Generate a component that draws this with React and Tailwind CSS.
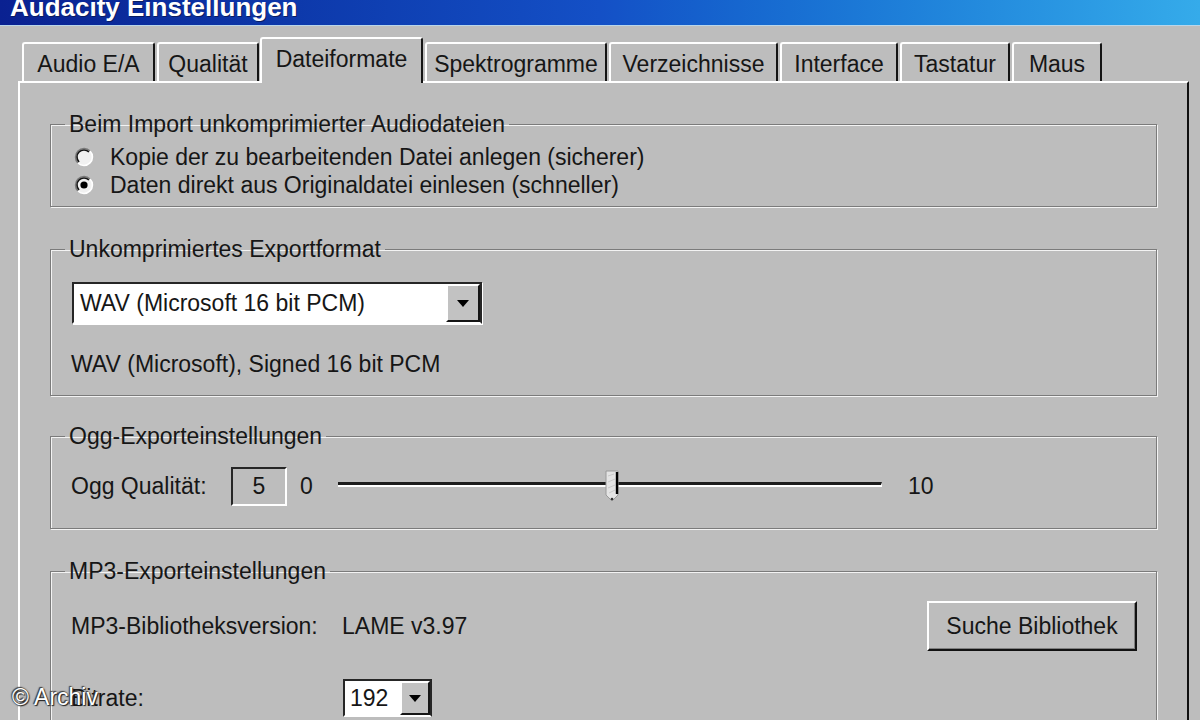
import React from 'react';

const tabs = [
    { name: 'Audio E/A', cls: 'w-[133px]' },
    { name: 'Qualität', cls: 'w-[102px] ml-[2px]' },
    { name: 'Dateiformate', cls: 'w-[163px] ml-[1px]', active: true },
    { name: 'Spektrogramme', cls: 'w-[182px] ml-[2px]' },
    { name: 'Verzeichnisse', cls: 'w-[169px] ml-[2px]' },
    { name: 'Interface', cls: 'w-[118px] ml-[2px]' },
    { name: 'Tastatur', cls: 'w-[110px] ml-[2px]' },
    { name: 'Maus', cls: 'w-[90px] ml-[2px]' },
];

function Radio({ checked }) {
    return (
        <svg width="20" height="20" viewBox="0 0 20 20" className="shrink-0">
            <circle cx="10" cy="10" r="8.5" fill="#f1f1f1" />
            <path d="M3.99 16.01 A8.5 8.5 0 0 1 16.01 3.99" fill="none" stroke="#7a7a7a" strokeWidth="1.6" />
            <path d="M5.05 14.95 A7 7 0 0 1 14.95 5.05" fill="none" stroke="#151515" strokeWidth="1.6" />
            <path d="M16.01 3.99 A8.5 8.5 0 0 1 3.99 16.01" fill="none" stroke="#ffffff" strokeWidth="1.6" />
            {checked && <circle cx="10" cy="10" r="3.6" fill="#000" />}
        </svg>
    );
}

function DropButton({ className }) {
    return (
        <div className={`h-full bg-[#c2c2c2] border-2 border-t-white border-l-white border-b-[#161616] border-r-[#161616] flex items-center justify-center ${className}`}>
            <svg width="12" height="7" viewBox="0 0 12 7">
                <path d="M0 0 H12 L6 7 Z" fill="#000" />
            </svg>
        </div>
    );
}

function Group({ title, className, children }) {
    return (
        <fieldset className={`border border-[#7b7b7b] shadow-[inset_1px_1px_0_#f3f3f3,1px_1px_0_#f3f3f3] px-0 ${className}`}>
            <legend className="ml-[14px] px-[4px] text-[23px] leading-[26px]">{title}</legend>
            {children}
        </fieldset>
    );
}

export default function App() {
    return (
        <div className="relative w-[1200px] h-[720px] overflow-hidden bg-[#bdbdbd] text-[#161616] font-['Liberation_Sans',Arial,sans-serif] flex flex-col">
            {/* Title bar */}
            <div className="h-[26px] shrink-0 bg-linear-to-r from-[#0a2191] via-[#1450c6] to-[#35abea] border-b border-[#b9d6ea] overflow-hidden">
                <div className="-mt-[6px] ml-[10px] text-[26px] leading-[26px] font-bold text-white [text-shadow:1px_1px_0_#0a1c60]">
                    Audacity Einstellungen
                </div>
            </div>

            {/* Tabs */}
            <div className="h-[55px] shrink-0 flex items-end pl-[22px]">
                {tabs.map((t) =>
                    t.active ? (
                        <div
                            key={t.name}
                            className={`relative z-10 h-[46px] -mb-[2px] bg-[#bdbdbd] border-t-2 border-l-2 border-white border-r-2 border-r-[#141414] rounded-t-[3px] flex justify-center pt-[6px] text-[23px] leading-[28px] ${t.cls}`}
                        >
                            {t.name}
                        </div>
                    ) : (
                        <div
                            key={t.name}
                            className={`h-[39px] border-t-2 border-l-2 border-white border-r-2 border-r-[#141414] rounded-t-[3px] flex justify-center pt-[6px] text-[23px] leading-[28px] ${t.cls}`}
                        >
                            {t.name}
                        </div>
                    )
                )}
            </div>

            {/* Panel */}
            <div className="ml-[18px] w-[1171px] flex-1 border-l-2 border-t-2 border-white border-r-2 border-r-[#101010] px-[30px] pt-[28px] text-[23px]">
                <Group title="Beim Import unkomprimierter Audiodateien" className="pt-[6px] pb-[7px]">
                    <div className="h-[28px] flex items-center pl-[23px] gap-[16px]">
                        <Radio />
                        <span>Kopie der zu bearbeitenden Datei anlegen (sicherer)</span>
                    </div>
                    <div className="h-[28px] flex items-center pl-[23px] gap-[16px]">
                        <Radio checked />
                        <span>Daten direkt aus Originaldatei einlesen (schneller)</span>
                    </div>
                </Group>

                <Group title="Unkomprimiertes Exportformat" className="mt-[29px] pt-[20px] pb-[17px]">
                    <div className="ml-[21px] w-[410px] h-[42px] bg-white border-2 border-t-[#262626] border-l-[#262626] border-b-white border-r-[#262626] flex items-center shadow-[1px_1px_0_#fff]">
                        <span className="pl-[6px]">WAV (Microsoft 16 bit PCM)</span>
                        <DropButton className="ml-auto w-[34px]" />
                    </div>
                    <div className="mt-[26px] h-[28px] flex items-center pl-[20px]">
                        WAV (Microsoft), Signed 16 bit PCM
                    </div>
                </Group>

                <Group title="Ogg-Exporteinstellungen" className="mt-[27px] pt-[18px] pb-[22px]">
                    <div className="h-[39px] flex items-center pl-[20px]">
                        <span className="w-[160px] shrink-0">Ogg Qualität:</span>
                        <div className="w-[56px] h-[39px] shrink-0 border-2 border-t-[#262626] border-l-[#262626] border-b-white border-r-white flex items-center justify-center">
                            5
                        </div>
                        <span className="ml-[13px] w-[13px]">0</span>
                        <div className="relative ml-[25px] w-[544px] h-[30px] -mt-[4px] flex items-center">
                            <div className="w-full h-[5px] border-t-[3px] border-[#1c1c1c] border-b-2 border-b-white border-r border-r-white" />
                            <svg className="absolute left-[267px] top-0" width="16" height="32" viewBox="0 0 16 32">
                                <path d="M1 1 H13 V25 L7 31 L1 25 Z" fill="#e4e4e4" stroke="#9a9a9a" strokeWidth="1" />
                                <path d="M3 6 L9 4 M3 12 L10 9 M3 18 L10 15 M4 23 L10 20" stroke="#c9c9c9" strokeWidth="1" />
                                <path d="M12 2 V24" stroke="#000" strokeWidth="2.4" />
                                <circle cx="7" cy="29" r="1.3" fill="#333" />
                            </svg>
                        </div>
                        <span className="ml-[26px]">10</span>
                    </div>
                </Group>

                <Group title="MP3-Exporteinstellungen" className="mt-[29px] pt-[17px] pb-[20px]">
                    <div className="h-[50px] flex items-center pl-[20px] pr-[19px]">
                        <span className="w-[271px] shrink-0">MP3-Bibliotheksversion:</span>
                        <span>LAME v3.97</span>
                        <div className="ml-auto w-[210px] h-[50px] border-2 border-t-white border-l-white border-b-[#111] border-r-[#111] shadow-[inset_-1px_-1px_0_#7f7f7f] flex items-center justify-center">
                            Suche Bibliothek
                        </div>
                    </div>
                    <div className="mt-[28px] h-[38px] flex items-center pl-[20px]">
                        <span className="w-[272px] shrink-0">Bitrate:</span>
                        <div className="w-[89px] h-[38px] bg-white border-2 border-t-[#262626] border-l-[#262626] border-b-white border-r-[#262626] flex items-center">
                            <span className="pl-[5px]">192</span>
                            <DropButton className="ml-auto w-[30px]" />
                        </div>
                    </div>
                </Group>
            </div>

            {/* Watermark */}
            <div className="absolute left-[12px] top-[684px] text-[23px] leading-[26px] text-white [text-shadow:0_0_2px_#222,1px_1px_1px_#222,-1px_-1px_1px_#444]">
                © Archiv
            </div>
        </div>
    );
}
